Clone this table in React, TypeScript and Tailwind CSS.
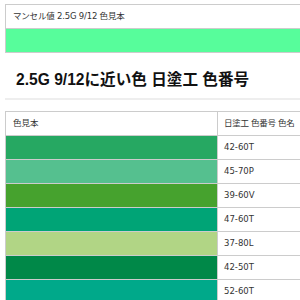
import React from "react";

const rows = [
  { color: "#26a862", code: "42-60T" },
  { color: "#55c08f", code: "45-70P" },
  { color: "#46a22e", code: "39-60V" },
  { color: "#00a476", code: "47-60T" },
  { color: "#b1d585", code: "37-80L" },
  { color: "#008848", code: "42-50T" },
  { color: "#00a98a", code: "52-60T" },
];

const jp = "font-['Verdana','DejaVu_Sans','Noto_Sans_CJK_JP',sans-serif]";

export default function App() {
  return (
    <div className={`w-[300px] h-[300px] overflow-hidden bg-white text-[#333] ${jp}`}>
      {/* munsell swatch */}
      <div className="ml-[5px] mt-[4px] w-[400px] border border-[#ccc]">
        <div className="h-[24px] flex items-center pl-[7px] text-[8.5px] tracking-[-0.2px] border-b border-[#ccc]">
          マンセル値 2.5G 9/12 色見本
        </div>
        <div className="h-[23px] bg-[#57fd9b]" />
      </div>

      <h2 className="mt-[17px] pl-[16px] text-[15.6px] leading-[20px] font-bold text-[#111] font-['Liberation_Sans','Noto_Sans_CJK_JP',sans-serif]">
        2.5G 9/12に近い色 日塗工 色番号
      </h2>
      <div className="ml-[5px] mt-[8px] h-[2px] bg-[#eee]" />

      {/* nippaint table */}
      <table className="ml-[5px] mt-[11px] w-[400px] border-collapse text-[8.5px]">
        <thead>
          <tr className="h-[24px]">
            <th className="w-[212px] border border-[#ccc] text-left font-normal pl-[7px]">色見本</th>
            <th className="border border-[#ccc] text-left font-normal pl-[6px] whitespace-nowrap tracking-[-0.3px]">
              日塗工 色番号 色名
            </th>
          </tr>
        </thead>
        <tbody>
          {rows.map((r) => (
            <tr key={r.code} className="h-[24px]">
              <td className="border border-[#ccc] p-0" style={{ backgroundColor: r.color }} />
              <td className="border border-[#ccc] pl-[6px]">{r.code}</td>
            </tr>
          ))}
        </tbody>
      </table>
    </div>
  );
}
